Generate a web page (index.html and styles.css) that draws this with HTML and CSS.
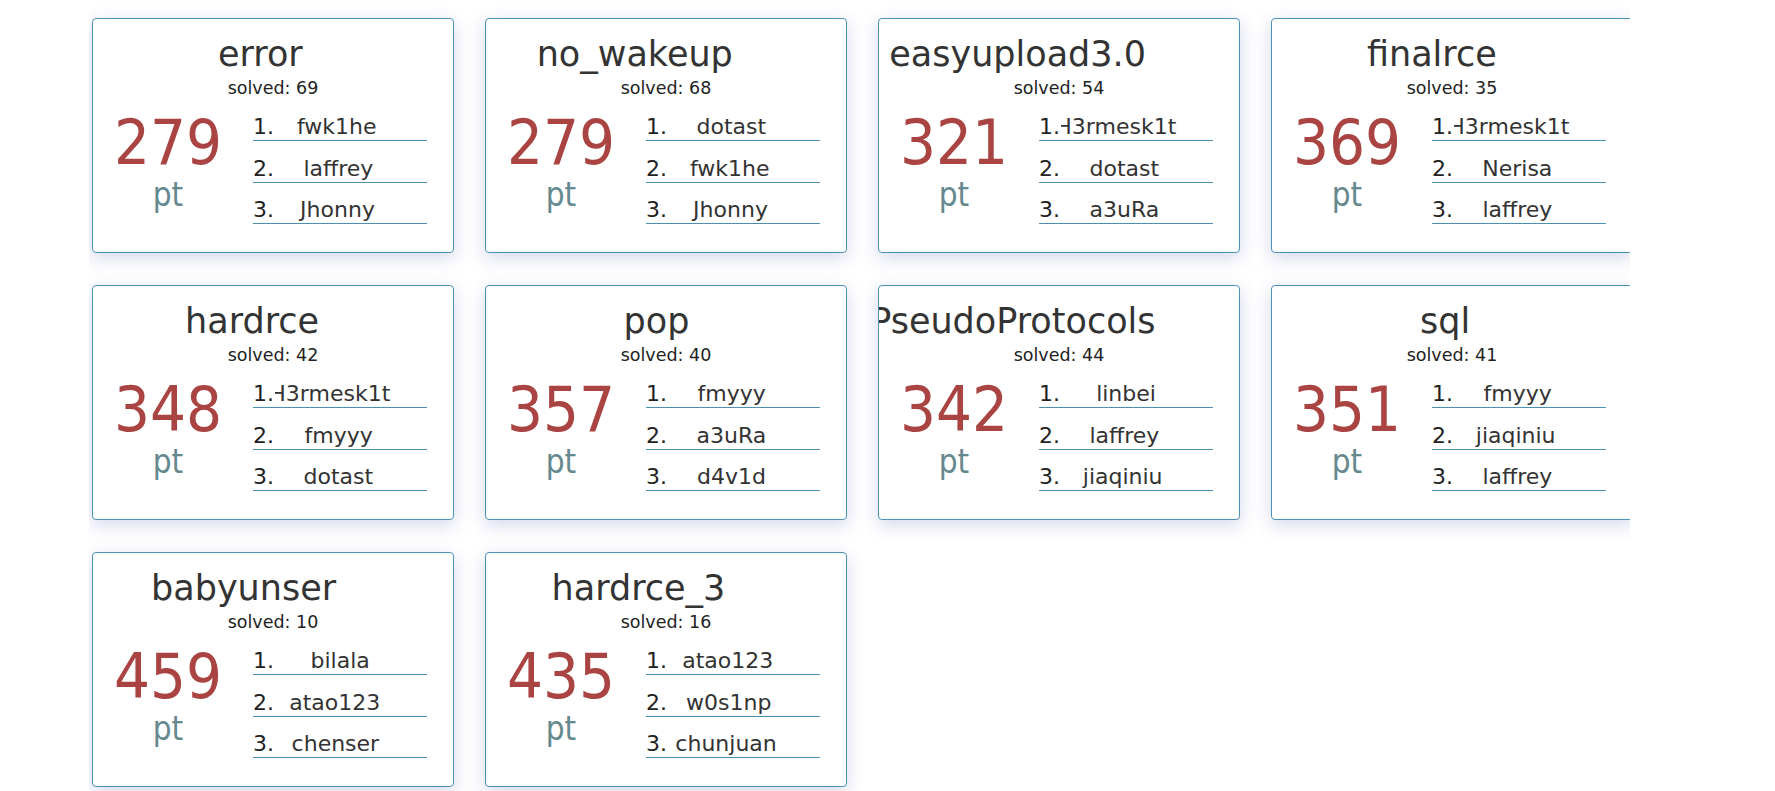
FILE: index.html
```html
<!DOCTYPE html>
<html lang="en">
<head>
<meta charset="utf-8">
<title>Challenges</title>
<link rel="stylesheet" href="styles.css">
</head>
<body>
<div class="board">
  <div class="grid">
    <div class="card">
      <h2 class="title"><span>error</span></h2>
      <div class="solved">solved: 69</div>
      <div class="body">
        <div class="score"><div class="num">279</div><div class="pt">pt</div></div>
        <ol class="top">
          <li><span class="name">fwk1he</span><span class="rank">1.</span></li>
          <li><span class="name">laffrey</span><span class="rank">2.</span></li>
          <li><span class="name">Jhonny</span><span class="rank">3.</span></li>
        </ol>
      </div>
    </div>
    <div class="card">
      <h2 class="title"><span>no_wakeup</span></h2>
      <div class="solved">solved: 68</div>
      <div class="body">
        <div class="score"><div class="num">279</div><div class="pt">pt</div></div>
        <ol class="top">
          <li><span class="name">dotast</span><span class="rank">1.</span></li>
          <li><span class="name">fwk1he</span><span class="rank">2.</span></li>
          <li><span class="name">Jhonny</span><span class="rank">3.</span></li>
        </ol>
      </div>
    </div>
    <div class="card">
      <h2 class="title"><span>easyupload3.0</span></h2>
      <div class="solved">solved: 54</div>
      <div class="body">
        <div class="score"><div class="num">321</div><div class="pt">pt</div></div>
        <ol class="top">
          <li><span class="name">H3rmesk1t</span><span class="rank">1.</span></li>
          <li><span class="name">dotast</span><span class="rank">2.</span></li>
          <li><span class="name">a3uRa</span><span class="rank">3.</span></li>
        </ol>
      </div>
    </div>
    <div class="card">
      <h2 class="title"><span>finalrce</span></h2>
      <div class="solved">solved: 35</div>
      <div class="body">
        <div class="score"><div class="num">369</div><div class="pt">pt</div></div>
        <ol class="top">
          <li><span class="name">H3rmesk1t</span><span class="rank">1.</span></li>
          <li><span class="name">Nerisa</span><span class="rank">2.</span></li>
          <li><span class="name">laffrey</span><span class="rank">3.</span></li>
        </ol>
      </div>
    </div>

    <div class="card">
      <h2 class="title"><span>hardrce</span></h2>
      <div class="solved">solved: 42</div>
      <div class="body">
        <div class="score"><div class="num">348</div><div class="pt">pt</div></div>
        <ol class="top">
          <li><span class="name">H3rmesk1t</span><span class="rank">1.</span></li>
          <li><span class="name">fmyyy</span><span class="rank">2.</span></li>
          <li><span class="name">dotast</span><span class="rank">3.</span></li>
        </ol>
      </div>
    </div>
    <div class="card">
      <h2 class="title"><span>pop</span></h2>
      <div class="solved">solved: 40</div>
      <div class="body">
        <div class="score"><div class="num">357</div><div class="pt">pt</div></div>
        <ol class="top">
          <li><span class="name">fmyyy</span><span class="rank">1.</span></li>
          <li><span class="name">a3uRa</span><span class="rank">2.</span></li>
          <li><span class="name">d4v1d</span><span class="rank">3.</span></li>
        </ol>
      </div>
    </div>
    <div class="card">
      <h2 class="title"><span>PseudoProtocols</span></h2>
      <div class="solved">solved: 44</div>
      <div class="body">
        <div class="score"><div class="num">342</div><div class="pt">pt</div></div>
        <ol class="top">
          <li><span class="name">linbei</span><span class="rank">1.</span></li>
          <li><span class="name">laffrey</span><span class="rank">2.</span></li>
          <li><span class="name">jiaqiniu</span><span class="rank">3.</span></li>
        </ol>
      </div>
    </div>
    <div class="card">
      <h2 class="title"><span>sql</span></h2>
      <div class="solved">solved: 41</div>
      <div class="body">
        <div class="score"><div class="num">351</div><div class="pt">pt</div></div>
        <ol class="top">
          <li><span class="name">fmyyy</span><span class="rank">1.</span></li>
          <li><span class="name">jiaqiniu</span><span class="rank">2.</span></li>
          <li><span class="name">laffrey</span><span class="rank">3.</span></li>
        </ol>
      </div>
    </div>

    <div class="card">
      <h2 class="title"><span>babyunser</span></h2>
      <div class="solved">solved: 10</div>
      <div class="body">
        <div class="score"><div class="num">459</div><div class="pt">pt</div></div>
        <ol class="top">
          <li><span class="name">bilala</span><span class="rank">1.</span></li>
          <li><span class="name">atao123</span><span class="rank">2.</span></li>
          <li><span class="name">chenser</span><span class="rank">3.</span></li>
        </ol>
      </div>
    </div>
    <div class="card">
      <h2 class="title"><span>hardrce_3</span></h2>
      <div class="solved">solved: 16</div>
      <div class="body">
        <div class="score"><div class="num">435</div><div class="pt">pt</div></div>
        <ol class="top">
          <li><span class="name">atao123</span><span class="rank">1.</span></li>
          <li><span class="name">w0s1np</span><span class="rank">2.</span></li>
          <li><span class="name">chunjuan</span><span class="rank">3.</span></li>
        </ol>
      </div>
    </div>
  </div>
</div>
</body>
</html>
```

FILE: styles.css
```css
html, body {
  margin: 0;
  padding: 0;
  height: 100%;
  overflow: hidden;
  background: #ffffff;
}

body {
  font-family: "DejaVu Sans", Verdana, sans-serif;
  color: #333333;
}

.board {
  margin-left: 89px;
  width: 1541px;
  height: 100%;
  overflow: hidden;
  padding: 18px 0 0 3px;
  box-sizing: border-box;
}

.grid {
  display: grid;
  grid-template-columns: repeat(4, 362px);
  grid-auto-rows: 235px;
  column-gap: 31px;
  row-gap: 32px;
}

.card {
  box-sizing: border-box;
  width: 362px;
  height: 235px;
  background: #ffffff;
  border: 1px solid #4b93b6;
  border-radius: 4px;
  box-shadow: 0 5px 18px rgba(60, 75, 175, 0.22);
  overflow: hidden;
  padding-top: 15px;
}

.title {
  margin: 0;
  padding-left: 3px;
  font-size: 35px;
  font-weight: normal;
  line-height: 40px;
  text-align: center;
  white-space: nowrap;
  color: #333333;
}

.title span {
  display: inline-block;
  transform: translateX(-16.7%);
}

.solved {
  margin-top: 4px;
  font-size: 17.5px;
  line-height: 20px;
  text-align: center;
  color: #222222;
}

.body {
  display: flex;
  margin-top: 15px;
}

.score {
  width: 150px;
  flex: none;
  text-align: center;
  font-family: "DejaVu Sans Condensed", "DejaVu Sans", sans-serif;
}

.num {
  font-size: 63px;
  line-height: 60px;
  color: #a94442;
}

.pt {
  margin-top: 4px;
  font-size: 33px;
  line-height: 36px;
  color: #65898e;
}

.top {
  list-style: none;
  margin: 1px 0 0 10px;
  padding: 0;
  width: 174px;
  flex: none;
}

.top li {
  display: grid;
  grid-template-columns: 1fr;
  font-size: 22px;
  line-height: 26px;
  border-bottom: 1px solid #4b8fb5;
  margin-bottom: 14.5px;
  white-space: nowrap;
  color: #333333;
}

.rank {
  grid-area: 1 / 1;
  justify-self: start;
  background: #ffffff;
  padding-right: 1px;
  z-index: 1;
  color: #222222;
}

.name {
  grid-area: 1 / 1;
  justify-self: center;
  margin-left: 20px;
  transform: translateX(-16.7%);
}
```
